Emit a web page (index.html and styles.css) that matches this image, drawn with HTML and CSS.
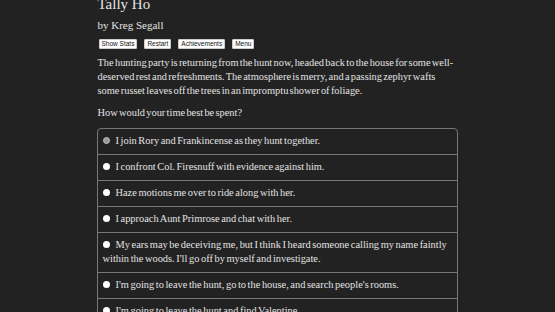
FILE: index.html
```html
<!DOCTYPE html>
<html lang="en">
<head>
	<meta charset="UTF-8">
	<title>Tally Ho</title>
	<link rel="stylesheet" href="styles.css">
</head>
<body>
	<div id="container">
		<h1 class="title">Tally Ho</h1>
		<h2 class="author">by Kreg Segall</h2>
		<div class="buttons">
			<button class="spacedLink">Show Stats</button>
			<button class="spacedLink">Restart</button>
			<button class="spacedLink">Achievements</button>
			<button class="spacedLink">Menu</button>
		</div>
		<div id="text">
			<p>The hunting party is returning from the hunt now, headed back to the house for some well-deserved rest and refreshments. The atmosphere is merry, and a passing zephyr wafts some russet leaves off the trees in an impromptu shower of foliage.</p>
			<p>How would your time best be spent?</p>
			<ul class="choice">
				<li><label><span class="radio checked"></span>I join Rory and Frankincense as they hunt together.</label></li>
				<li><label><span class="radio"></span>I confront Col. Firesnuff with evidence against him.</label></li>
				<li><label><span class="radio"></span>Haze motions me over to ride along with her.</label></li>
				<li><label><span class="radio"></span>I approach Aunt Primrose and chat with her.</label></li>
				<li><label><span class="radio"></span>My ears may be deceiving me, but I think I heard someone calling my name faintly within the woods. I'll go off by myself and investigate.</label></li>
				<li><label><span class="radio"></span>I'm going to leave the hunt, go to the house, and search people's rooms.</label></li>
				<li><label><span class="radio"></span>I'm going to leave the hunt and find Valentine.</label></li>
			</ul>
		</div>
	</div>
</body>
</html>
```
FILE: styles.css
```css
html,body {
	margin: 0;
	padding: 0;
	background: #222;
	color: #e2e2e2;
	font-family: "Liberation Serif", "DejaVu Serif", serif;
	overflow: hidden;
}
#container {
	width: 360px;
	margin: 0 auto;
}
.title {
	font-size: 15px;
	font-weight: normal;
	margin: -5px 0 0 0;
	line-height: 18px;
}
.author {
	font-size: 11px;
	font-weight: normal;
	margin: 5px 0 0 0;
	line-height: 14px;
}
.buttons {
	display: flex;
	gap: 7px;
	margin: 7px 0 0 1px;
}
.spacedLink {
	font-family: "Liberation Sans", Arial, sans-serif;
	font-size: 6.5px;
	line-height: 8px;
	padding: 0 2px;
	background: #fff;
	color: #111;
	border: 1px solid #ccc;
	border-radius: 1px;
}
#text p {
	font-size: 10.4px;
	line-height: 14px;
	word-spacing: -1.3px;
	margin: 7px 0 0 0;
}
#text p + p {
	margin-top: 8px;
}
.choice {
	list-style: none;
	margin: 8px 0 0 -1px;
	padding: 0;
	border: 1px solid #777;
	border-radius: 4px;
}
.choice li {
	border-top: 1px solid #777;
	padding: 5px 6px 6px 5px;
	font-size: 10.4px;
	line-height: 14px;
	word-spacing: -1px;
}
.choice li:first-child {
	border-top: none;
}
.radio {
	display: inline-block;
	width: 7px;
	height: 7px;
	border-radius: 50%;
	background: #fff;
	margin-right: 6px;
	vertical-align: 0;
}
.radio.checked {
	background: #999;
	border: 1px solid #bbb;
	width: 5px;
	height: 5px;
}
```
